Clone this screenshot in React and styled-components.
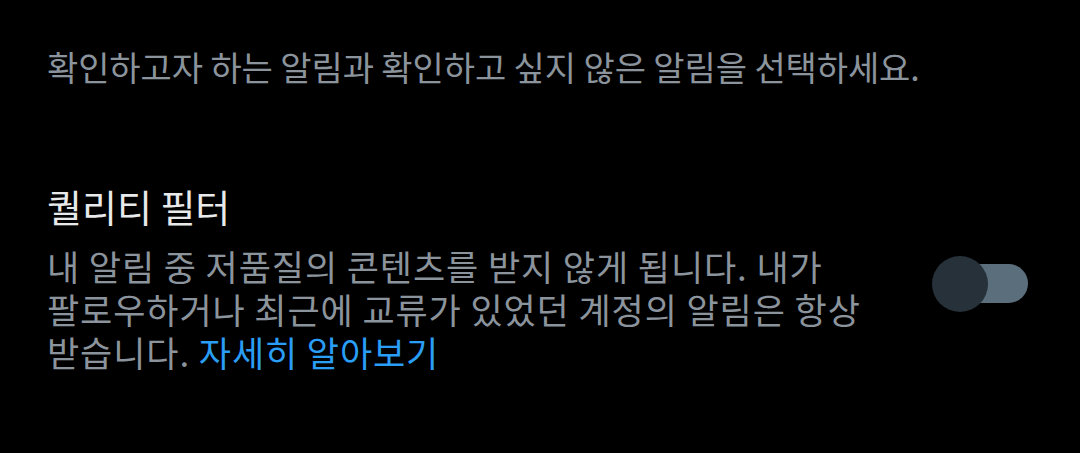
import React from "react";
import styled, { createGlobalStyle } from "styled-components";

const Global = createGlobalStyle`
  html, body { margin: 0; padding: 0; background: #000; }
  body { font-family: "Noto Sans CJK KR", "Noto Sans", sans-serif; }
`;

const Page = styled.div`
  width: 1080px;
  height: 453px;
  background: #000;
  box-sizing: border-box;
  padding: 45px 52px 0 47px;
  overflow: hidden;
`;

const Intro = styled.p`
  margin: 0;
  color: #8b949c;
  font-size: 34px;
  line-height: 44px;
  letter-spacing: -0.1px;
  white-space: nowrap;
`;

const SettingRow = styled.div`
  display: flex;
  align-items: flex-start;
  justify-content: space-between;
  margin-top: 93px;
`;

const SettingText = styled.div`
  display: flex;
  flex-direction: column;
`;

const Title = styled.h3`
  margin: 0;
  color: #e7e9ea;
  font-size: 38px;
  font-weight: 400;
  line-height: 48px;
`;

const Description = styled.p`
  margin: 14px 0 0;
  color: #8b949c;
  font-size: 35px;
  line-height: 43px;
  letter-spacing: 0.9px;
  white-space: nowrap;
`;

const Link = styled.a`
  color: #2a9df4;
  text-decoration: none;
`;

const Switch = styled.div`
  position: relative;
  flex: none;
  width: 95px;
  height: 39px;
  border-radius: 20px;
  background: #5b6e7b;
  margin-top: 82px;
`;

const Thumb = styled.span`
  position: absolute;
  left: -1px;
  top: -8px;
  width: 56px;
  height: 56px;
  border-radius: 50%;
  background: #26313a;
`;

export default function App() {
  return (
    <>
      <Global />
      <Page>
        <Intro>확인하고자 하는 알림과 확인하고 싶지 않은 알림을 선택하세요.</Intro>
        <SettingRow>
          <SettingText>
            <Title>퀄리티 필터</Title>
            <Description>
              내 알림 중 저품질의 콘텐츠를 받지 않게 됩니다. 내가
              <br />
              팔로우하거나 최근에 교류가 있었던 계정의 알림은 항상
              <br />
              받습니다. <Link href="#">자세히 알아보기</Link>
            </Description>
          </SettingText>
          <Switch>
            <Thumb />
          </Switch>
        </SettingRow>
      </Page>
    </>
  );
}
